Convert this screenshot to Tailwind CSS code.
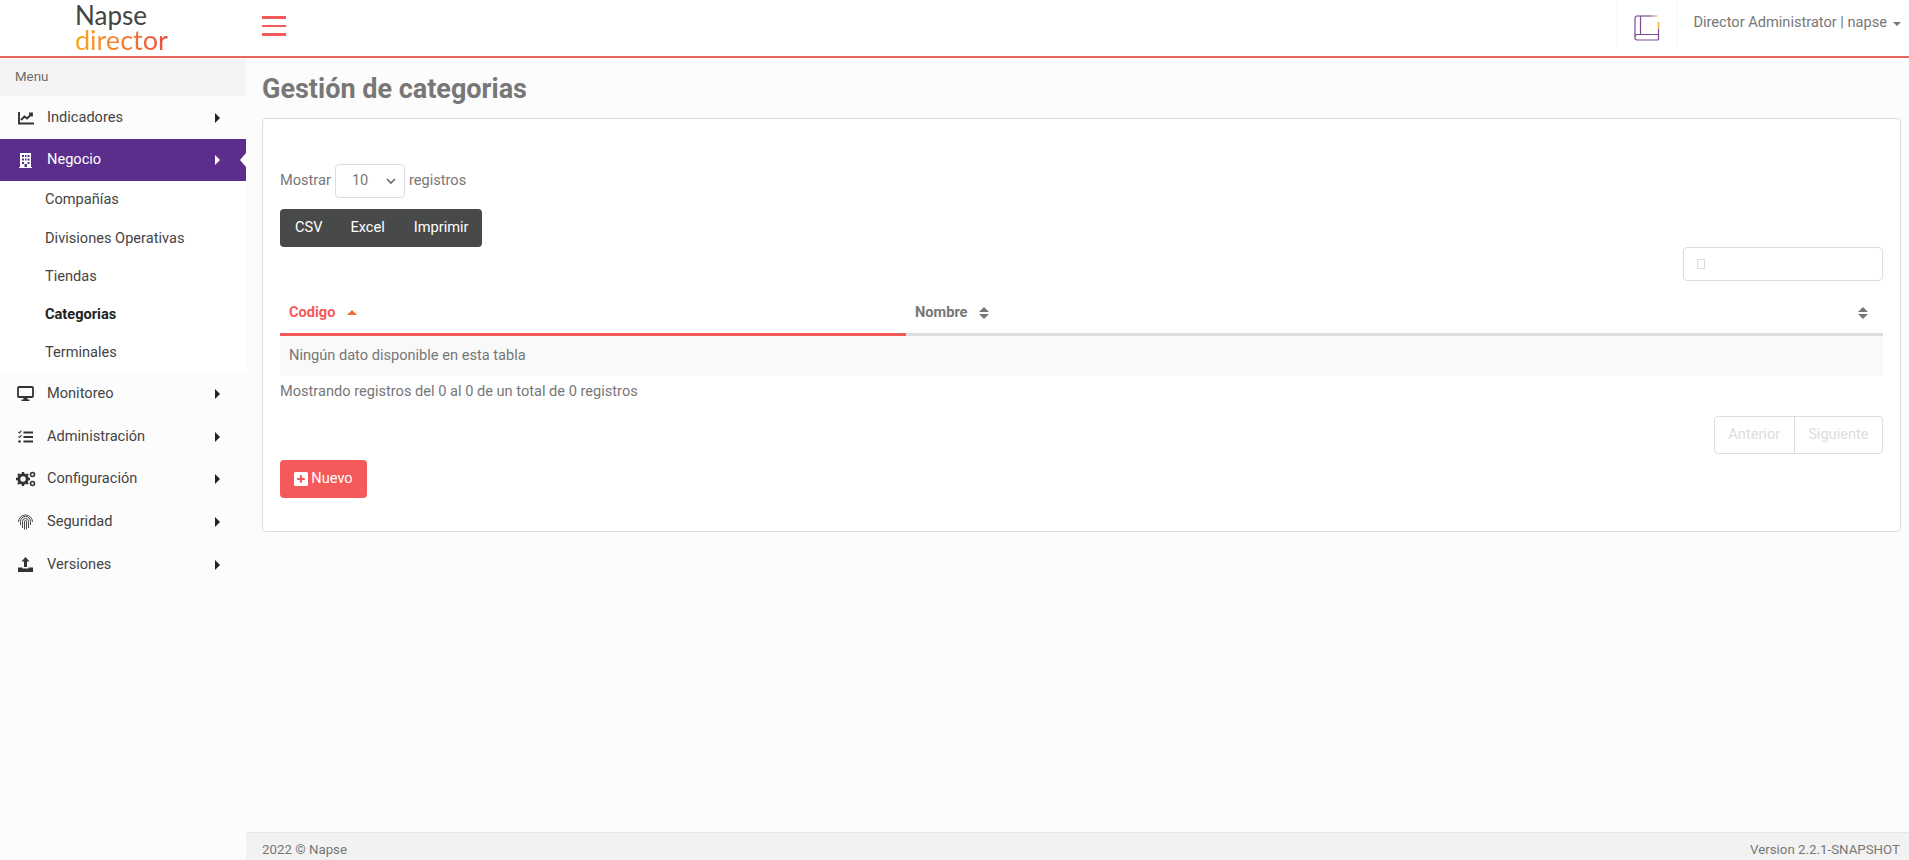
<!DOCTYPE html>
<html lang="es">
<head>
<meta charset="UTF-8">
<title>Gestión de categorias</title>
<script src="https://cdn.jsdelivr.net/npm/@tailwindcss/browser@4"></script>
</head>
<body class="font-['Roboto',sans-serif] text-[14.6px] bg-[#fcfcfc] text-[#777] h-[860px] overflow-hidden">

  <header class="h-[58px] bg-white border-b-2 border-[#e8645f] flex items-center">
    <div class="w-[246px] h-full pl-[75px] pt-[3px] leading-none font-['Lato',sans-serif] font-normal">
      <div class="text-[26px] leading-[25px] text-[#444]">Napse</div>
      <div class="text-[27px] leading-[24px] w-max bg-gradient-to-r from-[#f9a61a] to-[#ea4b3c] bg-clip-text text-transparent">director</div>
    </div>
    <button class="w-6 flex flex-col gap-[6px] ml-[16px] mb-[4px]">
      <span class="block h-[2.5px] bg-[#f55a5a]"></span>
      <span class="block h-[2.5px] bg-[#f55a5a]"></span>
      <span class="block h-[2.5px] bg-[#f55a5a]"></span>
    </button>
    <div class="ml-auto flex items-start h-full">
      <div class="w-[60px] h-[48px] pt-[15px] border-x border-[#f4f4f4] flex justify-center">
        <svg width="26" height="26" viewBox="0 0 26 26" fill="none">
          <defs>
            <linearGradient id="bookTop" gradientUnits="userSpaceOnUse" x1="3" x2="24.500" y1="1" y2="1">
              <stop offset="0.6" stop-color="#7b4a92"/>
              <stop offset="1" stop-color="#f8e6b8"/>
            </linearGradient>
          </defs>
          <path d="M24.500 14V24a1 1 0 0 1-1 1H3a2 2 0 0 1-2-2V3a2 2 0 0 1 2-2" stroke="#7b4a92" stroke-width="1.200"/>
          <path d="M3 1H24.500" stroke="url(#bookTop)" stroke-width="1.200"/>
          <path d="M6.500 1V19.500M1 21.500a2 2 0 0 1 2-2H24.500" stroke="#7b4a92" stroke-width="1.200"/>
          <path d="M24.500 7V14" stroke="#f5b640" stroke-width="1.600"/>
        </svg>
      </div>
      <div class="pl-[16px] pr-[8px] h-[46px] flex items-center text-[#777]">
        Director Administrator | napse
        <span class="ml-[6px] mt-[1px] border-x-[4px] border-x-transparent border-t-[4px] border-t-[#777]"></span>
      </div>
    </div>
  </header>

  <div class="flex h-[802px]">
    <aside class="w-[246px] shrink-0 text-[#444]">
      <div class="h-[38px] bg-[#f4f4f4] pl-[15px] flex items-center text-[13.300px] text-[#6b6b6b]">Menu</div>

      <a class="h-[43px] flex items-center">
        <span class="w-[47px] pl-[18px]">
          <svg width="16" height="14" viewBox="0 0 16 14" fill="none" stroke="#333"><path d="M1 1v11.500h15" stroke-width="1.900"/><path d="M3 9l3.500-3.500 2.500 2 5-5M11 2.500h3v3" stroke-width="1.800"/></svg>
        </span>
        <span>Indicadores</span>
        <span class="ml-auto mr-[26px] border-y-[5px] border-y-transparent border-l-[5px] border-l-[#222]"></span>
      </a>

      <a class="h-[42px] flex items-center bg-[#5b2d8c] text-white relative">
        <span class="w-[47px] pl-[19px]">
          <svg width="13" height="15" viewBox="0 0 13 15"><path fill="#fff" fill-rule="evenodd" d="M1 0h11v14h1v1H0v-1h1zM3 2v2h2V2zM6 2v2h1.500V2zM8.500 2v2h2V2zM3 5.500v2h2v-2zM6 5.500v2h1.500v-2zM8.500 5.500v2h2v-2zM3 9v2h2V9zM8.500 9v2h2V9zM5.500 11v3h2.500v-3z"/></svg>
        </span>
        <span>Negocio</span>
        <span class="ml-auto mr-[26px] border-y-[5px] border-y-transparent border-l-[5px] border-l-white"></span>
        <span class="absolute right-0 top-[14px] border-y-[7px] border-y-transparent border-r-[6px] border-r-white"></span>
      </a>

      <ul class="bg-white pl-[45px]">
        <li class="h-[38px] flex items-center">Compañías</li>
        <li class="h-[39px] flex items-center">Divisiones Operativas</li>
        <li class="h-[38px] flex items-center">Tiendas</li>
        <li class="h-[38px] flex items-center font-bold text-[#222]">Categorias</li>
        <li class="h-[38px] flex items-center">Terminales</li>
      </ul>

      <a class="h-[43px] flex items-center">
        <span class="w-[47px] pl-[17px]">
          <svg width="17" height="15" viewBox="0 0 17 15" fill="none"><rect x="1" y="1" width="15" height="10" rx="1" stroke="#333" stroke-width="1.800"/><path d="M6.500 12h4v1.500h2V15h-8v-1.500h2z" fill="#333"/></svg>
        </span>
        <span>Monitoreo</span>
        <span class="ml-auto mr-[26px] border-y-[5px] border-y-transparent border-l-[5px] border-l-[#222]"></span>
      </a>
      <a class="h-[43px] flex items-center">
        <span class="w-[47px] pl-[18px]">
          <svg width="15" height="14" viewBox="0 0 15 14" fill="none" stroke="#333"><path d="M5.500 2.500H15M5.500 7H15M5.500 11.500H15" stroke-width="1.800"/><path d="M.5 2l1 1 2-2.500M.5 6.500l1 1 2-2.500" stroke-width="1.100"/><circle cx="1.500" cy="11.500" r="1.300" fill="#333" stroke="none"/></svg>
        </span>
        <span>Administración</span>
        <span class="ml-auto mr-[26px] border-y-[5px] border-y-transparent border-l-[5px] border-l-[#222]"></span>
      </a>
      <a class="h-[42px] flex items-center">
        <span class="w-[47px] pl-[16px]">
          <svg width="20" height="16" viewBox="0 0 20 16" fill="none">
            <circle cx="7" cy="8" r="4.200" stroke="#333" stroke-width="3"/>
            <path d="M7 1v2.500M7 12.500V15M0 8h2.500M11.500 8H14M2 3l2 2M10 11l2 2M2 13l2-2M10 5l2-2" stroke="#333" stroke-width="2.400"/>
            <circle cx="16.500" cy="3.500" r="2" stroke="#333" stroke-width="1.600"/>
            <circle cx="16.500" cy="12.500" r="2" stroke="#333" stroke-width="1.600"/>
          </svg>
        </span>
        <span>Configuración</span>
        <span class="ml-auto mr-[26px] border-y-[5px] border-y-transparent border-l-[5px] border-l-[#222]"></span>
      </a>
      <a class="h-[43px] flex items-center">
        <span class="w-[47px] pl-[18px]">
          <svg width="15" height="16" viewBox="0 0 15 16" fill="none" stroke="#333" stroke-width=".9"><path d="M.5 8a7 7 0 0 1 14 0M2.500 11V7.500a5 5 0 0 1 10 0V11M4.500 14V7.500a3 3 0 0 1 6 0V14M6.500 15.500V7.500a1 1 0 0 1 2 0V15.500"/></svg>
        </span>
        <span>Seguridad</span>
        <span class="ml-auto mr-[26px] border-y-[5px] border-y-transparent border-l-[5px] border-l-[#222]"></span>
      </a>
      <a class="h-[43px] flex items-center">
        <span class="w-[47px] pl-[18px]">
          <svg width="15" height="15" viewBox="0 0 15 15"><path fill="#333" d="M7.500 0l4 4.500H9v5.500H6V4.500H3.500zM0 10.500h4.500v1h6v-1H15V15H0z"/></svg>
        </span>
        <span>Versiones</span>
        <span class="ml-auto mr-[26px] border-y-[5px] border-y-transparent border-l-[5px] border-l-[#222]"></span>
      </a>
    </aside>

    <main class="flex-1 flex flex-col min-w-0">
      <div class="flex-1 pl-[16px] pr-[8px]">
        <h1 class="text-[27px] leading-[30px] font-bold text-[#777] mt-[16px] mb-[14px]">Gestión de categorias</h1>

        <div class="h-[414px] bg-white border border-[#ddd] rounded-[4px] px-[17px] pt-[45px]">
          <div class="flex items-center h-[34px]">
            <span>Mostrar</span>
            <span class="ml-[4px] mr-[4px] w-[70px] h-[34px] border border-[#ddd] rounded-[4px] flex items-center pl-[16px] pr-[8px]">
              10
              <svg class="ml-auto" width="10" height="6" viewBox="0 0 10 6" fill="none" stroke="#666" stroke-width="1.600"><path d="M1 1l4 4 4-4"/></svg>
            </span>
            <span>registros</span>
          </div>

          <div class="mt-[11px] w-max h-[38px] bg-[#484a4a] rounded-[4px] flex items-center text-white">
            <span class="pl-[15px] pr-[14px]">CSV</span>
            <span class="px-[14px]">Excel</span>
            <span class="pl-[15px] pr-[13px]">Imprimir</span>
          </div>

          <div class="flex justify-end">
            <div class="w-[200px] h-[34px] border border-[#ddd] rounded-[4px] flex items-center pl-[13px]">
              <span class="w-[8px] h-[10px] border border-[#ddd]"></span>
            </div>
          </div>

          <div class="mt-[11px] grid grid-cols-[626px_1fr] h-[44px] border-b-[3px] border-[#ddd] font-bold">
            <div class="-mb-[3px] border-b-[3px] border-[#f55a5a] text-[#f55a5a] flex items-center pl-[9px]">
              Codigo
              <span class="ml-[12px] border-x-[5px] border-x-transparent border-b-[5px] border-b-[#f26a2e]"></span>
            </div>
            <div class="flex items-center pl-[9px] pr-[15px] text-[#777]">
              Nombre
              <span class="ml-[12px] flex flex-col gap-[2px]">
                <span class="border-x-[5px] border-x-transparent border-b-[5px] border-b-[#777]"></span>
                <span class="border-x-[5px] border-x-transparent border-t-[5px] border-t-[#777]"></span>
              </span>
              <span class="ml-auto flex flex-col gap-[2px]">
                <span class="border-x-[5px] border-x-transparent border-b-[5px] border-b-[#777]"></span>
                <span class="border-x-[5px] border-x-transparent border-t-[5px] border-t-[#777]"></span>
              </span>
            </div>
          </div>
          <div class="h-[40px] bg-[#f9f9f9] flex items-center pl-[9px]">Ningún dato disponible en esta tabla</div>

          <div class="h-[32px] flex items-center">Mostrando registros del 0 al 0 de un total de 0 registros</div>

          <div class="flex justify-end mt-[8px]">
            <div class="flex h-[38px] border border-[#ddd] rounded-[4px] text-[#ddd]">
              <span class="px-[13.500px] flex items-center border-r border-[#ddd]">Anterior</span>
              <span class="px-[13.500px] flex items-center">Siguiente</span>
            </div>
          </div>

          <button class="mt-[6px] w-[87px] h-[38px] bg-[#f55a5a] rounded-[4px] text-white flex items-center justify-center gap-[3px]">
            <svg width="14" height="14" viewBox="0 0 13 13"><path fill="#fff" fill-rule="evenodd" d="M1.500 0h10A1.500 1.500 0 0 1 13 1.500v10a1.500 1.500 0 0 1-1.500 1.500h-10A1.500 1.500 0 0 1 0 11.500v-10A1.500 1.500 0 0 1 1.500 0zM5.500 3v2.500H3v2h2.500V10h2V7.500H10v-2H7.500V3z"/></svg>
            Nuevo
          </button>
        </div>
      </div>

      <footer class="h-[28px] bg-[#f2f2f2] border-t border-[#e6e6e6] flex items-center justify-between pt-[6px] pl-[16px] pr-[9px] text-[13.300px] text-[#777]">
        <span>2022 © Napse</span>
        <span>Version 2.2.1-SNAPSHOT</span>
      </footer>
    </main>
  </div>
</body>
</html>
